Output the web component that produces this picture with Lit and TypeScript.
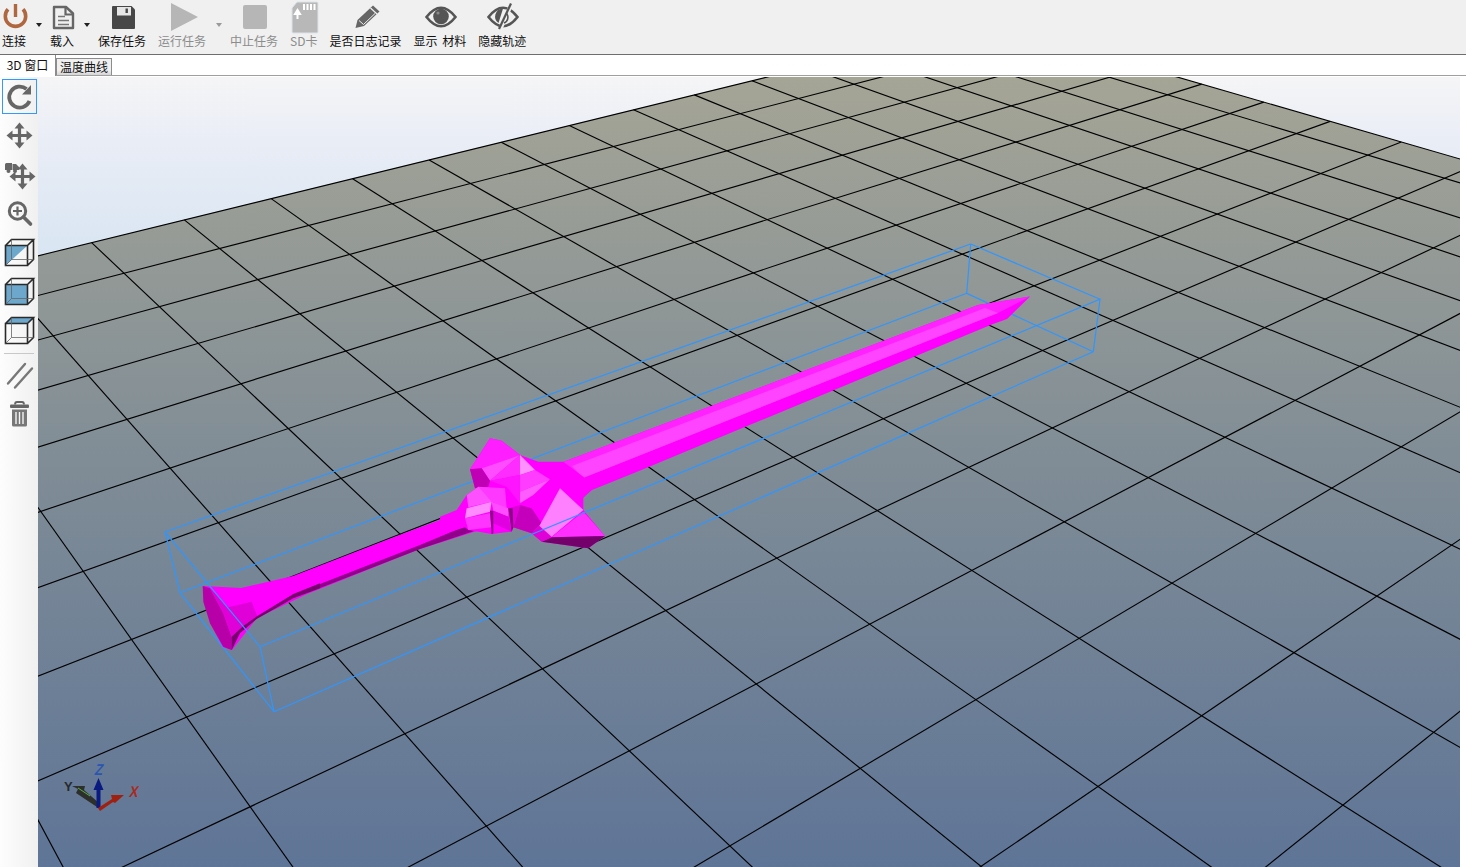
import { LitElement, css, html, svg } from 'lit';
import { customElement } from 'lit/decorators.js';

// grid point (col, row) -> screen pixel, read off the reference
const GRID_PTS = [
  [0, 0, 91.7, 242.7], [8, 0, 694.7, 94.7], [0, 5, 288, 428.7], [4, 5, 673.7, 299.7],
  [13, 5, 1230.1, 113.7], [13, 4, 1167.3, 95], [-2, 9, 250.7, 806], [-1, 10, 486.6, 826],
  [1, 12, 981.5, 866], [6, 12, 1451.9, 545], [3, 13, 1342.6, 805], [0, 10, 629, 751],
  [3, 11, 1079, 639], [6, 11, 1331.7, 487.7], [4, 13, 1433.7, 732.7], [-1, 6, 217.9, 522.7],
  [12, 5, 1181.4, 129], [9, 5, 1021.6, 183.3],
];

function solve(a: number[][], b: number[]) {
  const n = b.length;
  for (let i = 0; i < n; i++) {
    let p = i;
    for (let r = i + 1; r < n; r++) if (Math.abs(a[r][i]) > Math.abs(a[p][i])) p = r;
    [a[i], a[p]] = [a[p], a[i]];
    [b[i], b[p]] = [b[p], b[i]];
    for (let r = i + 1; r < n; r++) {
      const f = a[r][i] / a[i][i];
      for (let c = i; c < n; c++) a[r][c] -= f * a[i][c];
      b[r] -= f * b[i];
    }
  }
  const x = new Array(n).fill(0);
  for (let i = n - 1; i >= 0; i--) {
    let s = b[i];
    for (let c = i + 1; c < n; c++) s -= a[i][c] * x[c];
    x[i] = s / a[i][i];
  }
  return x;
}

function fitHomography() {
  const ata = Array.from({ length: 8 }, () => new Array(8).fill(0));
  const atb = new Array(8).fill(0);
  const add = (row: number[], v: number) => {
    for (let i = 0; i < 8; i++) {
      atb[i] += row[i] * v;
      for (let j = 0; j < 8; j++) ata[i][j] += row[i] * row[j];
    }
  };
  for (const [c, r, px, py] of GRID_PTS) {
    const u = c / 10, v = r / 10, x = px / 1000, y = py / 1000;
    add([u, v, 1, 0, 0, 0, -u * x, -v * x], x);
    add([0, 0, 0, u, v, 1, -u * y, -v * y], y);
  }
  return solve(ata, atb);
}

const H = fitHomography();
const depth = (c: number, r: number) => H[6] * c / 10 + H[7] * r / 10 + 1;
const project = (c: number, r: number): [number, number] => {
  const u = c / 10, v = r / 10;
  const w = depth(c, r);
  return [(1000 * (H[0] * u + H[1] * v + H[2])) / w, (1000 * (H[3] * u + H[4] * v + H[5])) / w];
};

const COL_MIN = -6, COL_MAX = 13.75, ROW_MAX = 22;
// far corners of the plate fall behind the camera, stop lines short of that
const MIN_DEPTH = 0.12;

const gridLine = (a: [number, number], b: [number, number]) =>
  svg`<line x1=${a[0]} y1=${a[1]} x2=${b[0]} y2=${b[1]}></line>`;

function lastRow(c: number) {
  let r = ROW_MAX;
  while (depth(c, r) < MIN_DEPTH) r -= 0.25;
  return r;
}

function firstCol(r: number) {
  let c = COL_MIN;
  while (depth(c, r) < MIN_DEPTH) c += 0.25;
  return c;
}

function gridLines() {
  const out = [];
  for (let c = COL_MIN; c <= 13; c++) out.push(gridLine(project(c, 0), project(c, lastRow(c))));
  out.push(gridLine(project(COL_MAX, 0), project(COL_MAX, lastRow(COL_MAX))));
  for (let r = 0; r <= ROW_MAX; r++) out.push(gridLine(project(firstCol(r), r), project(COL_MAX, r)));
  return out;
}

// clip-path for the build plate, relative to the scene's corner at (38,77)
function plateClip() {
  const tl = project(COL_MIN, 0);
  const pts = [tl, project(COL_MAX, 0), project(COL_MAX, lastRow(COL_MAX)), [1600, 1000], [-100, 1000], [-100, tl[1]]];
  return `polygon(${pts.map(([x, y]) => `${(x - 38).toFixed(1)}px ${(y - 77).toFixed(1)}px`).join(',')})`;
}

const poly = (points: string, fill: string) => svg`<polygon points=${points} fill=${fill}></polygon>`;

// guard facets, in coords of a 3x crop at (440,420)
const GUARD = [
  ['150,55 185,62 240,105 295,125 370,125 430,170 445,185 430,235 430,270 495,348 445,385 305,365 275,340 220,322 215,335 155,342 85,330 75,322 0,345 0,290 50,270 80,225 115,200 105,205 90,148', '#ff00ff'],
  ['150,55 185,62 240,105 125,145 90,148', '#ff1eff'],
  ['125,145 240,105 150,182', '#ff4cff'],
  ['150,182 240,105 240,165', '#ff2cff'],
  ['240,105 285,150 240,165', '#ff90ff'],
  ['240,165 285,150 330,178 240,215', '#ff3cff'],
  ['240,215 330,178 280,225 240,250', '#ff5cff'],
  ['150,182 240,165 240,250 200,200', '#ff14ff'],
  ['90,148 125,145 150,182 145,200 105,205', '#c000b4'],
  ['240,255 275,265 305,310 275,340 220,322', '#c400bc'],
  ['240,255 205,265 220,322', '#e000dc'],
  ['360,205 430,270 335,350 298,318', '#ff80ff'],
  ['430,275 495,348 335,352', '#ff30ff'],
  ['305,365 335,352 495,348 445,385', '#74006c'],
  ['275,340 298,318 335,352 305,365', '#e000d8'],
  ['115,200 195,205 200,265 155,245 120,240', '#ff38ff'],
  ['80,225 115,200 155,245 85,262', '#ff50ff'],
  ['75,295 80,265 155,245 150,275', '#ff8cff'],
  ['75,295 150,280 155,322 85,330', '#ff34ff'],
  ['155,245 205,265 205,290 160,272', '#ff4cff'],
  ['160,272 205,290 215,335 160,310', '#e000e0'],
  ['150,272 160,272 160,340 155,342', '#8a0084'],
  ['205,265 218,265 220,322 215,335', '#8a0084'],
];

// pommel facets, in coords of a 3x crop at (160,520)
const POMMEL = [
  ['128,198 130,245 150,310 190,380 215,390 215,350 190,280 150,205', '#b800a8'],
  ['150,205 205,262 275,245 292,290 250,325 215,350 190,280', '#e000d8'],
  ['215,350 250,318 292,288 400,222 480,190 480,205 400,235 290,297 240,340 215,390', '#78006e'],
];

const TOOLS = [
  { label: '连接', icon: 'power', menu: true },
  { label: '载入', icon: 'doc', menu: true },
  { label: '保存任务', icon: 'save' },
  { label: '运行任务', icon: 'play', off: true, menu: true },
  { label: '中止任务', icon: 'stop', off: true },
  { label: 'SD卡', icon: 'sd', off: true },
  { label: '是否日志记录', icon: 'pencil' },
  { label: '显示 材料', icon: 'eye' },
  { label: '隐藏轨迹', icon: 'eyeoff' },
];

const eyeShape = svg`<path d="M4.5 17 Q19 -1.5 33.5 17 Q19 35.5 4.5 17Z" fill="#f0f0f0" stroke="#555" stroke-width="2.6"></path>`;

const TOOL_ICONS: Record<string, unknown> = {
  power: svg`<path d="M12 9.3 A10.2 10.2 0 1 0 27 9.3" fill="none" stroke="#b0663e" stroke-width="3.6"></path>
    <path d="M19.5 4V17" stroke="#b0663e" stroke-width="3.4"></path>`,
  doc: svg`<path d="M10 7H22L29 13.5V28H10Z" fill="#f0f0f0" stroke="#666" stroke-width="2.4" stroke-linejoin="round"></path>
    <path d="M21.5 7V14.5H29" fill="none" stroke="#666" stroke-width="2.2"></path>
    <path d="M14 16.5H21M14 20.5H25M14 24.5H25" stroke="#777" stroke-width="1.6"></path>`,
  save: svg`<path d="M9 6H27.5L31 9.5V28Q31 29 30 29H9Q8 29 8 28V7Q8 6 9 6Z" fill="#474747"></path>
    <rect x="13" y="7" width="14" height="8.5" fill="#e6e6e6"></rect><rect x="21.5" y="8.5" width="2.4" height="4.5" fill="#474747"></rect>`,
  play: svg`<polygon points="7,3 34,17 7,31" fill="#b6b6b6"></polygon>`,
  stop: svg`<rect x="7" y="5" width="24" height="24" rx="2" fill="#b6b6b6"></rect>`,
  sd: svg`<path d="M11 2H31Q32 2 32 3V32Q32 33 31 33H7Q6 33 6 32V8Z" fill="#b8b8b8" stroke="#dde4ea" stroke-width="1"></path>
    <path d="M18 4V10M21.5 4V10M25 4V10M28.5 4V10" stroke="#fff" stroke-width="2"></path>
    <path d="M11.5 19V12M9 14L11.5 10L14 14Z" stroke="#fff" stroke-width="2" fill="#fff"></path>`,
  pencil: svg`<path d="M7.5 28L9.5 20L25 5.5L31.5 11.5L16 26Z" fill="#666"></path>
    <path d="M11 20.5L15.5 24.5L27 13.5" fill="none" stroke="#f0f0f0" stroke-width="1"></path>
    <path d="M22.5 8L29 14" stroke="#f0f0f0" stroke-width="1.2"></path>`,
  eye: svg`${eyeShape}<circle cx="19" cy="16.5" r="7.8" fill="#555"></circle><circle cx="16" cy="13" r="1.6" fill="#888"></circle>`,
  eyeoff: svg`${eyeShape}<path d="M19 8.5A8 8 0 0 0 14.5 23Z" fill="#555"></path>
    <path d="M28 3L16 30" stroke="#f0f0f0" stroke-width="4"></path><path d="M27 3.5L15 29" stroke="#555" stroke-width="2.2"></path>
    <path d="M22 13A6 6 0 0 1 20 23" fill="none" stroke="#555" stroke-width="1.6"></path>`,
};

const moveCross = (x: number, y: number) => svg`
  <g transform="translate(${x} ${y})" fill="#666">
    <path d="M-9 0H9M0 -9V9" stroke="#666" stroke-width="3.2"></path>
    <polygon points="0,-13 -5,-7 5,-7"></polygon><polygon points="0,13 -5,7 5,7"></polygon>
    <polygon points="-13,0 -7,-5 -7,5"></polygon><polygon points="13,0 7,-5 7,5"></polygon>
  </g>`;

const cube = (faces: unknown) => svg`${faces}
  <g fill="none" stroke="#2a2a2a">
    <path d="M5.5 12.5H27.5V32.5H5.5ZM5.5 12.5L11.5 6.5H33.5L27.5 12.5M33.5 6.5V26.5L27.5 32.5" stroke-width="1.6"></path>
    <path d="M11.5 6.5V26.5H33.5M11.5 26.5L5.5 32.5" stroke-width=".8" stroke="#666"></path>
  </g>`;

const SIDE_ICONS: Record<string, unknown> = {
  rotate: svg`<path d="M29.5 24A10.5 10.5 0 1 1 26.5 12" fill="none" stroke="#666" stroke-width="3.8"></path>
    <polygon points="31,8 31,17.5 22,17.5" fill="#666"></polygon>`,
  move: moveCross(19.5, 19.5),
  truck: svg`${moveCross(22.5, 21.5)}
    <path d="M5 9.5Q5 8 6.5 8H12V15H5ZM12.5 9H16L19 12V15H12.5Z" fill="#666"></path>
    <circle cx="8.5" cy="16" r="2" fill="#666"></circle><circle cx="15" cy="16" r="2" fill="#666"></circle>`,
  zoom: svg`<circle cx="17.5" cy="17" r="8.2" fill="none" stroke="#666" stroke-width="3"></circle>
    <path d="M13 17H22M17.5 12.5V21.5" stroke="#666" stroke-width="2.2"></path>
    <path d="M23.5 23L30.5 30" stroke="#666" stroke-width="3.6" stroke-linecap="round"></path>`,
  cube1: cube(svg`<polygon points="5.5,32.5 5.5,12.5 27.5,12.5" fill="#6da7cc"></polygon>`),
  cube2: cube(svg`<rect x="5.5" y="12.5" width="22" height="20" fill="#6da7cc"></rect>`),
  cube3: cube(svg`<polygon points="5.5,12.5 11.5,6.5 33.5,6.5 27.5,12.5" fill="#6da7cc"></polygon>`),
  lines: svg`<path d="M8 27.5L25 8M15 31.5L32 12.5" stroke="#777" stroke-width="2.4" stroke-linecap="round"></path>`,
  trash: svg`<path d="M15 9.5Q15 7 17 7H22Q24 7 24 9.5" fill="none" stroke="#666" stroke-width="1.8"></path>
    <rect x="10" y="9.5" width="19" height="3.4" rx="1" fill="#666"></rect>
    <path d="M12 14.5H27V30Q27 31.5 25.5 31.5H13.5Q12 31.5 12 30Z" fill="#777"></path>
    <path d="M16 17V29M19.5 17V29M23 17V29" stroke="#f4f4f4" stroke-width="1.4"></path>`,
};

@customElement('app-root')
export class AppRoot extends LitElement {
  renderTool(t: { label: string; icon: string; off?: boolean; menu?: boolean }) {
    return html`<div class="tool ${t.off ? 'off' : ''} ${t.menu ? 'menu' : ''}">
      <svg class="tool-icon" width="36" height="34" viewBox="0 0 36 34">${TOOL_ICONS[t.icon]}</svg>
      <span>${t.label}</span>
      ${t.menu ? html`<i class="caret"></i>` : ''}
    </div>`;
  }

  renderSide(name: string) {
    return html`<div class="side-btn">
      <svg width="38" height="39" viewBox="0 0 38 39">${SIDE_ICONS[name]}</svg>
    </div>`;
  }

  renderScene() {
    return svg`
      <g class="grid">${gridLines()}</g>
      <g class="box">
        <path d="M165 532L970.7 244M180 592.7L966.7 293.3M165 532L180 592.7L274 711.7M970.7 244L966.7 293.3L1093.3 351.7M274 711.7L1093.3 351.7"></path>
      </g>
      ${poly('203,586 241,588 293,576 402,534 459,513 480,500 480,530 420,549 307,594 257,618 232,650 223,647 210,623', '#ff00ff')}
      ${poly('480,529 420,549 320,588 320,584 420,545 468,525', '#90008a')}
      <g transform="translate(160 520) scale(.3333)">${POMMEL.map(([p, f]) => poly(p, f))}</g>
      ${poly('563,462 978,305 1030,296.5 1007,319 993,324 639,471 592,490 583,498 561,487', '#ff00ff')}
      ${poly('563,462 978,305 1030,296.5 998,313 583,478', '#ff22ff')}
      ${poly('572,466 985,308 998,313 583,478', '#ff44ff')}
      <g transform="translate(440 420) scale(.3333)">${GUARD.map(([p, f]) => poly(p, f))}</g>
      <g class="box">
        <path d="M165 532L260 646.7L274 711.7M260 646.7L1100 299.3L1093.3 351.7M970.7 244L1100 299.3"></path>
      </g>
      <g>
        <polygon points="98.5,808 76,793 78,789 72,786 85,786 84,790 99,803" fill="#2c2f2c"></polygon>
        <path d="M78 788L90 796" stroke="#58b040" stroke-width="1"></path>
        <polygon points="96.5,808 96.5,790 93.5,790 98.5,778 103.5,790 100.5,790 100.5,808" fill="#0a1a80"></polygon>
        <polygon points="98,808 112,799 111,795 124,795 115,803 113,802 100,811" fill="#a02010"></polygon>
        <text class="axis" transform="translate(98 775) skewX(-14) scale(1 1.2)" text-anchor="middle" fill="#2a55b0">Z</text>
        <text class="axis" x="64" y="791" fill="#262a2a">Y</text>
        <text class="axis" transform="translate(133 797) skewX(-12) scale(1 1.2)" text-anchor="middle" fill="#a82a20">X</text>
      </g>`;
  }

  render() {
    return html`
      <div class="toolbar">${TOOLS.map((t) => this.renderTool(t))}</div>
      <div class="tabs">
        <div class="tab active">3D 窗口</div>
        <div class="tab">温度曲线</div>
      </div>
      <div class="body">
        <div class="side">
          <div class="side-btn selected"><svg width="38" height="39" viewBox="0 0 38 39">${SIDE_ICONS.rotate}</svg></div>
          ${['move', 'truck', 'zoom', 'cube1', 'cube2', 'cube3'].map((n) => this.renderSide(n))}
          <div class="sep"></div>
          ${['lines', 'trash'].map((n) => this.renderSide(n))}
        </div>
        <div class="scene">
          <div class="plate" style="clip-path: ${plateClip()}"></div>
          <svg width="1422" height="790" viewBox="38 77 1422 790">${this.renderScene()}</svg>
        </div>
      </div>
    `;
  }

  static styles = css`
    :host {
      display: block;
      width: 1466px;
      height: 867px;
      overflow: hidden;
      background: #fff;
      font-family: "Noto Sans CJK SC", "Liberation Sans", sans-serif;
      font-size: 12px;
      color: #111;
    }
    .toolbar {
      display: flex;
      gap: 12px;
      height: 54px;
      padding-left: 2px;
      box-sizing: content-box;
      background: #f0f0f0;
      border-bottom: 1px solid #6e6e6e;
    }
    .tool {
      position: relative;
      display: flex;
      flex-direction: column;
      align-items: center;
    }
    .tool.menu { margin-right: 12px; }
    .tool-icon { display: block; flex: none; margin: 0 -12px; }
    .tool span { line-height: 14px; white-space: nowrap; word-spacing: 2px; }
    .tool.off span { color: #8c8c8c; }
    .caret {
      position: absolute;
      right: -16px;
      top: 23px;
      border: 3px solid transparent;
      border-top: 4px solid #222;
      border-bottom: 0;
    }
    .tool.off .caret { border-top-color: #999; }
    .tabs {
      display: flex;
      align-items: flex-end;
      height: 20px;
      border-bottom: 1px solid #a0a0a0;
      box-sizing: content-box;
      background: #fff;
    }
    .tab {
      box-sizing: border-box;
      width: 56px;
      height: 17px;
      line-height: 16px;
      text-align: center;
      border: 1px solid #8c8c8c;
      border-bottom: 0;
      background: linear-gradient(#f0f0f0 70%, #d4d4d4);
    }
    .tab.active {
      width: 56px;
      height: 21px;
      margin-bottom: -1px;
      line-height: 20px;
      border: 0;
      border-right: 1px solid #8c8c8c;
      background: #fff;
      position: relative;
    }
    .body { display: flex; height: 791px; padding-top: 1px; box-sizing: border-box; }
    .side {
      display: flex;
      flex-direction: column;
      flex: none;
      width: 38px;
      background: linear-gradient(90deg, #fdfdfd, #f0f0f0);
    }
    .side-btn { position: relative; flex: none; height: 39px; }
    .side-btn svg { display: block; }
    .side-btn.selected::after {
      content: "";
      position: absolute;
      left: 2px;
      top: 2px;
      width: 33px;
      height: 33px;
      border: 1px solid #3399ff;
    }
    .sep { height: 1px; margin: 3px 4px 2px; background: #c8c8c8; flex: none; }
    .scene {
      position: relative;
      flex: none;
      width: 1422px;
      height: 790px;
      background: linear-gradient(#f5f5f6, #e9edf6 64px, #d8e5f2 183px);
    }
    .plate {
      position: absolute;
      inset: 0;
      background: linear-gradient(#a5a596, #7f8c96 50%, #5f7597);
    }
    .scene svg { position: absolute; inset: 0; display: block; }
    .grid line { stroke: #000; stroke-width: 1.15; }
    .box path { fill: none; stroke: #2f96ff; stroke-width: 1.2; }
    .axis { font-family: "Liberation Sans", sans-serif; font-size: 13px; font-weight: bold; }
  `;
}

declare global {
  interface HTMLElementTagNameMap {
    'app-root': AppRoot
  }
}
